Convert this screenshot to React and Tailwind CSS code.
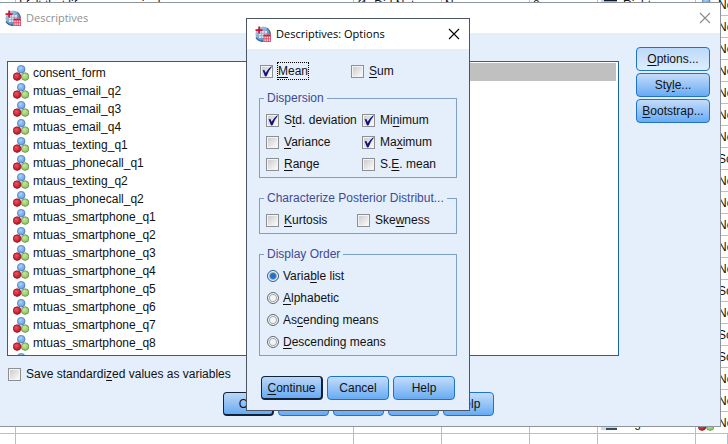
import React from "react";

const variables = [
  "consent_form",
  "mtuas_email_q2",
  "mtuas_email_q3",
  "mtuas_email_q4",
  "mtuas_texting_q1",
  "mtuas_phonecall_q1",
  "mtaus_texting_q2",
  "mtuas_phonecall_q2",
  "mtuas_smartphone_q1",
  "mtuas_smartphone_q2",
  "mtuas_smartphone_q3",
  "mtuas_smartphone_q4",
  "mtuas_smartphone_q5",
  "mtuas_smartphone_q6",
  "mtuas_smartphone_q7",
  "mtuas_smartphone_q8",
  "mtuas_smartphone_q9",
];

const measures = "NNNNNNNSNNNNNSNSSNNN".split("").map((m) => (m === "N" ? "Nominal" : "Scale"));

function NominalIcon() {
  return (
    <svg viewBox="0 0 16 16" className="size-4 shrink-0" aria-hidden="true">
      <defs>
        <radialGradient id="nb" cx="0.4" cy="0.35" r="0.7">
          <stop offset="0" stopColor="#a9d2fa" />
          <stop offset="1" stopColor="#5b9be0" />
        </radialGradient>
        <radialGradient id="nr" cx="0.4" cy="0.35" r="0.7">
          <stop offset="0" stopColor="#ea5560" />
          <stop offset="1" stopColor="#b80f20" />
        </radialGradient>
        <radialGradient id="ng" cx="0.4" cy="0.35" r="0.7">
          <stop offset="0" stopColor="#c6e6a0" />
          <stop offset="1" stopColor="#88bd5c" />
        </radialGradient>
      </defs>
      <circle cx="8.2" cy="4.2" r="3.8" fill="url(#nb)" stroke="#4779b5" strokeWidth="0.8" />
      <circle cx="12.1" cy="11.6" r="3.8" fill="url(#ng)" stroke="#64923f" strokeWidth="0.8" />
      <circle cx="4.1" cy="11.6" r="3.8" fill="url(#nr)" stroke="#8c1220" strokeWidth="0.8" />
    </svg>
  );
}

function AppIcon() {
  return (
    <svg viewBox="0 0 16 16" className="size-4 shrink-0" aria-hidden="true">
      <defs>
        <linearGradient id="globe" x1="0" y1="0" x2="1" y2="1">
          <stop offset="0" stopColor="#c9d8e6" />
          <stop offset="0.5" stopColor="#7fa6cb" />
          <stop offset="1" stopColor="#2c6aa8" />
        </linearGradient>
      </defs>
      <circle cx="8" cy="8" r="7.6" fill="url(#globe)" />
      <path d="M12 2.2A7.6 7.6 0 0 1 15.4 8" stroke="#4b7399" strokeWidth="1.2" fill="none" />
      <path d="M1 11.5A7.6 7.6 0 0 0 8 15.2" stroke="#265f9c" strokeWidth="1.4" fill="none" />
      <path d="M4 5h8v7H4z" fill="#dce8f3" />
      <path d="M4 7.3h8M4 9.6h8M6.6 5v7M9.3 5v7" stroke="#88a9c8" strokeWidth="0.8" />
      <path d="M0.5 4.2h7M4.2 0.5v7" stroke="#cf1239" strokeWidth="1.8" />
      <path d="M8.5 8.5h7.5V16H8.5z" fill="#fbe3e8" />
      <path d="M8.5 8.5h7.5v2H8.5z" fill="#cf1239" />
      <path d="M8.5 12.8h7.5M8.5 15.4h7.5M9 9v7M11.2 9v7M13.4 9v7M15.6 9v7" stroke="#d33b59" strokeWidth="0.8" />
    </svg>
  );
}

function AlignIcon() {
  return (
    <svg viewBox="0 0 16 16" className="size-4 shrink-0" aria-hidden="true">
      <path d="M0 1h16v14H0z" fill="#c9dcee" />
      <path d="M3 3.5h13M6 7h10M3 10.5h13M5 14h11" stroke="#0c1a2c" strokeWidth="1.5" />
    </svg>
  );
}

function Close({ label, color }) {
  return (
    <button type="button" aria-label={label} className={"flex size-4 items-center justify-center " + color}>
      <svg viewBox="0 0 12 12" className="size-3" aria-hidden="true">
        <path d="M1 1l10 10M11 1L1 11" stroke="currentColor" strokeWidth="1.1" />
      </svg>
    </button>
  );
}

/* Draws the character after "&" underlined as the keyboard mnemonic. */
function Mnemonic({ text }) {
  const at = text.indexOf("&");
  if (at < 0) return <>{text}</>;
  return (
    <>
      {text.slice(0, at)}
      <span className="underline underline-offset-2">{text[at + 1]}</span>
      {text.slice(at + 2)}
    </>
  );
}

function Check({ text, checked, focused }) {
  return (
    <label className="flex h-[22px] items-center whitespace-nowrap">
      <span className="grid size-[13px] shrink-0">
        <input
          type="checkbox"
          defaultChecked={checked}
          className="peer col-start-1 row-start-1 size-[13px] appearance-none border border-[#8c8f94] bg-linear-to-br from-[#c8c8c8] to-white shadow-[inset_0_0_0_1px_#f4f4f4] outline-none"
        />
        <svg
          viewBox="0 0 13 13"
          className="pointer-events-none invisible col-start-1 row-start-1 size-[13px] overflow-visible peer-checked:visible"
          aria-hidden="true"
        >
          <path d="M2.6 5.2L5 11.4L6.6 11.2Q8.2 6 12 1.4L11 1.6Q7.6 4.4 5.6 7.8L4.4 5z" fill="#14147c" />
        </svg>
      </span>
      <span className={focused ? "ml-1 border border-dotted border-black" : "ml-[5px]"}>
        <Mnemonic text={text} />
      </span>
    </label>
  );
}

function Radio({ text, checked }) {
  return (
    <label className="flex h-[22px] items-center gap-1 whitespace-nowrap">
      <span className="ml-px grid size-3 shrink-0 place-items-center">
        <input
          type="radio"
          name="display-order"
          defaultChecked={checked}
          className="peer col-start-1 row-start-1 size-3 appearance-none rounded-full border border-[#5f6b78] bg-[#f4f4f4] shadow-[inset_0_0_0_1px_#ffffff,inset_0_0_0_2px_#a9adb2] outline-none checked:border-[#2f5f96] checked:bg-[#a9d0f7]"
        />
        <span className="pointer-events-none invisible col-start-1 row-start-1 size-[6px] rounded-full bg-[#1f6fcb] peer-checked:visible" />
      </span>
      <span>
        <Mnemonic text={text} />
      </span>
    </label>
  );
}

function Group({ title, children }) {
  return (
    <fieldset className="min-w-0 border border-[#7f9fc4] px-[6px]">
      <legend className="-ml-[2px] h-4 max-w-[190px] truncate px-[3px] leading-4 text-[#3f4a96]">{title}</legend>
      <div className="pt-[3px] pb-[2px]">{children}</div>
    </fieldset>
  );
}

const tones = {
  normal: "border-[#1f74c8] bg-linear-to-b from-[#c3dcfa] to-[#67abf3]",
  light: "border-[#1f74c8] bg-linear-to-b from-[#bcd9fa] to-[#deeefe]",
  primary: "border-[#10233c] border-r-2 border-b-2 bg-linear-to-b from-[#bcd6f5] to-[#67abf3]",
};

function Button({ text, tone = "normal", width }) {
  return (
    <button
      type="button"
      className={"flex h-6 items-center justify-center rounded-[4px] border whitespace-nowrap " + tones[tone] + " " + width}
    >
      <span>
        <Mnemonic text={text} />
      </span>
    </button>
  );
}

function DataGrid() {
  const cell = "h-[22px] overflow-hidden border-r border-b border-[#a9c3de] px-[3px] py-0 whitespace-nowrap";
  return (
    <table className="-mt-[6px] w-full table-fixed border-separate border-spacing-0">
      <colgroup>
        <col className="w-4" />
        <col className="w-[338px]" />
        <col className="w-[88px]" />
        <col className="w-[88px]" />
        <col className="w-[68px]" />
        <col className="w-[98px]" />
        <col />
      </colgroup>
      <tbody>
        {measures.map((m, i) => (
          <tr key={i}>
            <td className={cell} />
            <td className={cell}>{i === 0 ? "I felt that life was meaningless" : ""}</td>
            <td className={cell}>{i === 0 ? "{1, Did Not..." : "None"}</td>
            <td className={cell}>None</td>
            <td className={cell}>8</td>
            <td className={cell}>
              <span className="flex items-center gap-[6px]">
                <AlignIcon />
                Right
              </span>
            </td>
            <td className="h-[22px] overflow-hidden border-b border-[#a9c3de] py-0 pl-[2px] whitespace-nowrap">
              <span className="flex items-center gap-1">
                <NominalIcon />
                {m}
              </span>
            </td>
          </tr>
        ))}
        <tr>
          {[0, 1, 2, 3, 4, 5, 6].map((c) => (
            <td key={c} className={cell} />
          ))}
        </tr>
      </tbody>
    </table>
  );
}

function DescriptivesWindow() {
  return (
    <section
      aria-label="Descriptives"
      className="absolute top-[2px] right-[7px] bottom-[17px] left-0 flex flex-col border-t border-r border-b border-[#8d949c] bg-[#e4effb]"
    >
      <header className="flex h-[30px] shrink-0 items-center gap-[5px] bg-white pr-[7px] pl-[5px]">
        <AppIcon />
        <h1 className="flex-1 font-['Open_Sans',sans-serif] text-[11px] text-[#8f8f8f]">Descriptives</h1>
        <Close label="Close Descriptives" color="text-[#8a8a8a]" />
      </header>
      <div className="flex min-h-0 flex-1 pt-7 pr-[10px] pl-[7px]">
        <ul className="min-w-0 flex-1 overflow-hidden border border-[#1d62ad] bg-white pt-[2px] pl-[5px]">
          {variables.map((v) => (
            <li key={v} className="flex h-[18px] items-center gap-1">
              <NominalIcon />
              {v}
            </li>
          ))}
        </ul>
        <div className="w-14" />
        <div className="min-w-0 flex-1 border border-[#1d62ad] bg-white p-px pr-[2px]">
          <div className="h-[18px] bg-[#c0c0c0]" />
        </div>
        <div className="-mt-[14px] ml-[17px] flex w-[74px] flex-col gap-[2px]">
          <Button text="&Options..." tone="light" width="w-full" />
          <Button text="Sty&le..." width="w-full" />
          <Button text="&Bootstrap..." width="w-full" />
        </div>
      </div>
      <div className="pt-[7px] pl-2">
        <Check text="Save standardi&zed values as variables" />
      </div>
      <footer className="flex justify-center gap-1 pt-[7px] pr-1 pb-[10px]">
        <Button text="OK" tone="primary" width="w-[51px]" />
        <Button text="&Paste" width="w-[51px]" />
        <Button text="&Reset" width="w-[51px]" />
        <Button text="Cancel" width="w-[51px]" />
        <Button text="Help" width="w-[51px]" />
      </footer>
    </section>
  );
}

function OptionsDialog() {
  return (
    <section
      role="dialog"
      aria-label="Descriptives: Options"
      className="absolute top-[18px] left-[246px] w-[224px] border border-[#4b5563] bg-[#e4effb]"
    >
      <header className="flex h-[30px] items-center gap-[5px] bg-white pr-[7px] pl-2">
        <AppIcon />
        <h2 className="flex-1 font-['Open_Sans',sans-serif] text-[11px] text-black">Descriptives: Options</h2>
        <Close label="Close Options" color="text-black" />
      </header>
      <div className="px-3 pt-[11px] pb-[10px]">
        <div className="mb-2 flex pl-px">
          <div className="w-[91px]">
            <Check text="&Mean" checked focused />
          </div>
          <Check text="&Sum" />
        </div>
        <div className="flex flex-col gap-3">
          <Group title="Dispersion">
            <div className="grid grid-cols-[96px_1fr]">
              <Check text="S&td. deviation" checked />
              <Check text="Mi&nimum" checked />
              <Check text="&Variance" />
              <Check text="Ma&ximum" checked />
              <Check text="&Range" />
              <Check text="S.&E. mean" />
            </div>
          </Group>
          <Group title="Characterize Posterior Distribut...">
            <div className="grid grid-cols-[91px_1fr]">
              <Check text="&Kurtosis" />
              <Check text="Ske&wness" />
            </div>
          </Group>
          <Group title="Display Order">
            <Radio text="Varia&ble list" checked />
            <Radio text="&Alphabetic" />
            <Radio text="As&cending means" />
            <Radio text="&Descending means" />
          </Group>
        </div>
        <div className="mt-5 flex justify-center gap-1">
          <Button text="&Continue" tone="primary" width="w-[62px]" />
          <Button text="Cancel" width="w-[62px]" />
          <Button text="Help" width="w-[62px]" />
        </div>
      </div>
    </section>
  );
}

export default function App() {
  return (
    <main className="relative h-screen overflow-hidden bg-white font-['Liberation_Sans',Arial,sans-serif] text-[12px] leading-4 text-[#111111]">
      <DataGrid />
      <DescriptivesWindow />
      <OptionsDialog />
    </main>
  );
}
